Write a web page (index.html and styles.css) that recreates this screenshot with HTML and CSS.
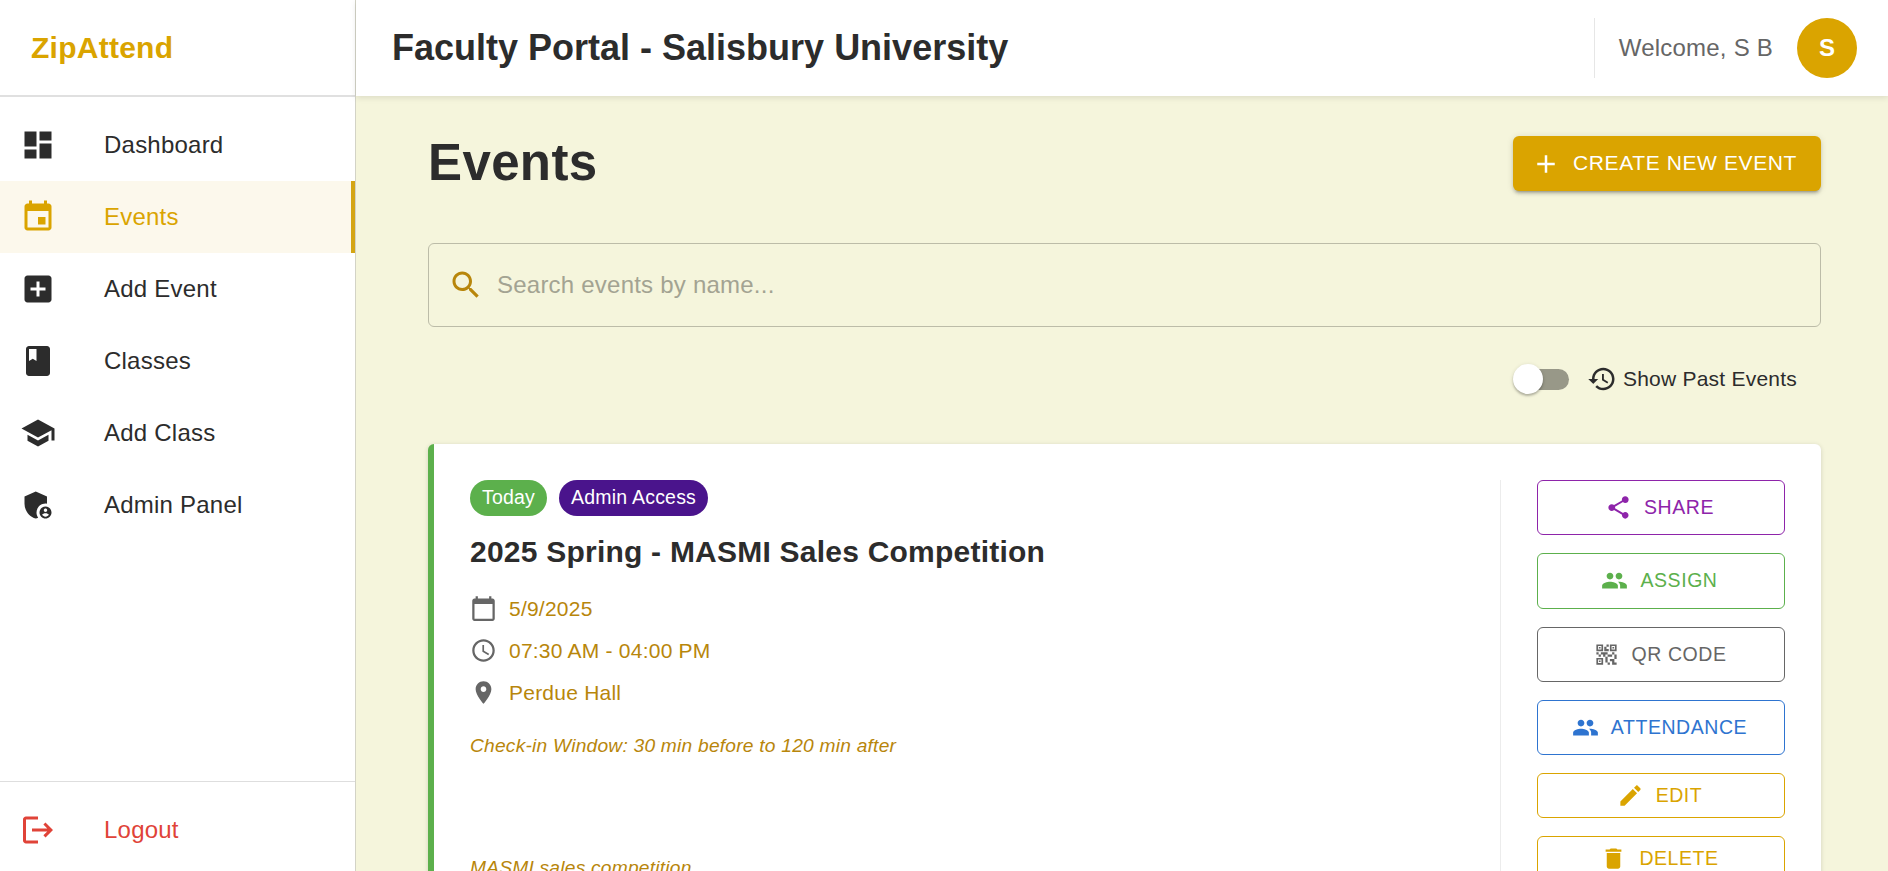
FILE: index.html
```html
<!DOCTYPE html>
<html lang="en">
<head>
<meta charset="utf-8">
<title>ZipAttend</title>
<link rel="stylesheet" href="styles.css">
</head>
<body>
<div class="app">
  <aside class="sidebar">
    <div class="brand">ZipAttend</div>
    <nav class="nav">
      <a class="nav-item"><span class="nav-icon"><svg viewBox="0 0 24 24"><path d="M3 13h8V3H3v10zm0 8h8v-6H3v6zm10 0h8V11h-8v10zm0-18v6h8V3h-8z"/></svg></span>Dashboard</a>
      <a class="nav-item active"><span class="nav-icon"><svg viewBox="0 0 24 24"><path d="M17 12h-5v5h5v-5zM16 1v2H8V1H6v2H5c-1.11 0-1.99.9-1.99 2L3 19c0 1.1.89 2 2 2h14c1.1 0 2-.9 2-2V5c0-1.1-.9-2-2-2h-1V1h-2zm3 18H5V8h14v11z"/></svg></span>Events</a>
      <a class="nav-item"><span class="nav-icon"><svg viewBox="0 0 24 24"><path d="M19 3H5c-1.11 0-2 .9-2 2v14c0 1.1.89 2 2 2h14c1.1 0 2-.9 2-2V5c0-1.1-.9-2-2-2zm-2 10h-4v4h-2v-4H7v-2h4V7h2v4h4v2z"/></svg></span>Add Event</a>
      <a class="nav-item"><span class="nav-icon"><svg viewBox="0 0 24 24"><path d="M18 2H6c-1.1 0-2 .9-2 2v16c0 1.1.9 2 2 2h12c1.1 0 2-.9 2-2V4c0-1.1-.9-2-2-2zM6 4h5v8l-2.5-1.5L6 12V4z"/></svg></span>Classes</a>
      <a class="nav-item"><span class="nav-icon"><svg viewBox="0 0 24 24"><path d="M5 13.18v4L12 21l7-3.82v-4L12 17l-7-3.82zM12 3 1 9l11 6 9-4.91V17h2V9L12 3z"/></svg></span>Add Class</a>
      <a class="nav-item"><span class="nav-icon"><svg viewBox="0 0 24 24"><path d="M17 11c.34 0 .67.04 1 .09V6.27L10.5 3 3 6.27v4.91c0 4.54 3.2 8.79 7.5 9.82.55-.13 1.08-.32 1.6-.55-.69-.98-1.1-2.17-1.1-3.45 0-3.31 2.69-6 6-6z"/><path d="M17 13c-2.21 0-4 1.79-4 4s1.79 4 4 4 4-1.79 4-4-1.79-4-4-4zm0 1.38c.62 0 1.12.51 1.12 1.12s-.51 1.12-1.12 1.12-1.12-.51-1.12-1.12.5-1.12 1.12-1.12zm0 5.37c-.93 0-1.74-.46-2.24-1.17.05-.72 1.51-1.08 2.24-1.08s2.19.36 2.24 1.08c-.5.71-1.31 1.17-2.24 1.17z"/></svg></span>Admin Panel</a>
    </nav>
    <div class="nav-footer">
      <a class="nav-item logout"><span class="nav-icon"><svg viewBox="0 0 24 24"><path d="m17 7-1.41 1.41L18.17 11H8v2h10.17l-2.58 2.58L17 17l5-5zM4 5h8V3H4c-1.1 0-2 .9-2 2v14c0 1.1.9 2 2 2h8v-2H4V5z"/></svg></span>Logout</a>
    </div>
  </aside>
  <div class="page">
    <header class="topbar">
      <div class="portal">Faculty Portal - Salisbury University</div>
      <div class="user"><span>Welcome, S B</span><span class="avatar">S</span></div>
    </header>
    <main class="content">
      <div class="heading">
        <h1>Events</h1>
        <button class="create"><svg viewBox="0 0 24 24"><path d="M19 13h-6v6h-2v-6H5v-2h6V5h2v6h6v2z"/></svg><span>CREATE NEW EVENT</span></button>
      </div>
      <div class="search">
        <svg viewBox="0 0 24 24"><path d="M15.5 14h-.79l-.28-.27C15.41 12.59 16 11.11 16 9.5 16 5.91 13.09 3 9.5 3S3 5.91 3 9.5 5.91 16 9.5 16c1.61 0 3.09-.59 4.23-1.57l.27.28v.79l5 4.99L20.49 19l-4.99-5zm-6 0C7.01 14 5 11.99 5 9.5S7.01 5 9.5 5 14 7.01 14 9.5 11.99 14 9.5 14z"/></svg>
        <span>Search events by name...</span>
      </div>
      <div class="filter">
        <span class="switch"><span class="thumb"></span></span>
        <svg viewBox="0 0 24 24"><path d="M13 3c-4.97 0-9 4.03-9 9H1l3.89 3.89.07.14L9 12H6c0-3.87 3.13-7 7-7s7 3.13 7 7-3.13 7-7 7c-1.93 0-3.68-.79-4.94-2.06l-1.42 1.42C8.27 19.99 10.51 21 13 21c4.97 0 9-4.03 9-9s-4.03-9-9-9zm-1 5v5l4.28 2.54.72-1.21-3.5-2.08V8H12z"/></svg>
        <span>Show Past Events</span>
      </div>
      <section class="card">
        <div class="details">
          <div class="chips"><span class="chip today">Today</span><span class="chip admin">Admin Access</span></div>
          <h2>2025 Spring - MASMI Sales Competition</h2>
          <div class="facts">
            <div class="fact"><svg viewBox="0 0 24 24"><path d="M20 3h-1V1h-2v2H7V1H5v2H4c-1.1 0-2 .9-2 2v16c0 1.1.9 2 2 2h16c1.1 0 2-.9 2-2V5c0-1.1-.9-2-2-2zm0 18H4V8h16v13z"/></svg>5/9/2025</div>
            <div class="fact"><svg viewBox="0 0 24 24"><path d="M11.99 2C6.47 2 2 6.48 2 12s4.47 10 9.99 10C17.52 22 22 17.52 22 12S17.52 2 11.99 2zM12 20c-4.42 0-8-3.58-8-8s3.58-8 8-8 8 3.58 8 8-3.58 8-8 8zm.5-13H11v6l5.25 3.15.75-1.23-4.5-2.67z"/></svg>07:30 AM - 04:00 PM</div>
            <div class="fact"><svg viewBox="0 0 24 24"><path d="M12 2C8.13 2 5 5.13 5 9c0 5.25 7 13 7 13s7-7.75 7-13c0-3.87-3.13-7-7-7zm0 9.5c-1.38 0-2.5-1.12-2.5-2.5s1.12-2.5 2.5-2.5 2.5 1.12 2.5 2.5-1.12 2.5-2.5 2.5z"/></svg>Perdue Hall</div>
          </div>
          <p class="note">Check-in Window: 30 min before to 120 min after</p>
          <p class="note description">MASMI sales competition</p>
        </div>
        <div class="actions">
          <button class="action share"><svg viewBox="0 0 24 24"><path d="M18 16.08c-.76 0-1.44.3-1.96.77L8.91 12.7c.05-.23.09-.46.09-.7s-.04-.47-.09-.7l7.05-4.11c.54.5 1.25.81 2.04.81 1.66 0 3-1.34 3-3s-1.34-3-3-3-3 1.34-3 3c0 .24.04.47.09.7L8.04 9.81C7.5 9.31 6.79 9 6 9c-1.66 0-3 1.34-3 3s1.34 3 3 3c.79 0 1.5-.31 2.04-.81l7.12 4.16c-.05.21-.08.43-.08.65 0 1.61 1.31 2.92 2.92 2.92s2.92-1.31 2.92-2.92-1.31-2.92-2.92-2.92z"/></svg>SHARE</button>
          <button class="action assign"><svg viewBox="0 0 24 24"><path d="M16 11c1.66 0 2.99-1.34 2.99-3S17.66 5 16 5s-3 1.34-3 3 1.34 3 3 3zm-8 0c1.66 0 2.99-1.34 2.99-3S9.66 5 8 5 5 6.34 5 8s1.34 3 3 3zm0 2c-2.33 0-7 1.17-7 3.5V19h14v-2.5c0-2.33-4.67-3.5-7-3.5zm8 0c-.29 0-.62.02-.97.05 1.16.84 1.97 1.97 1.97 3.45V19h6v-2.5c0-2.33-4.67-3.5-7-3.5z"/></svg>ASSIGN</button>
          <button class="action qr"><svg viewBox="0 0 24 24"><path d="M15 21h-2v-2h2v2zm-2-7h-2v5h2v-5zm8-2h-2v4h2v-4zm-2-2h-2v2h2v-2zM7 12H5v2h2v-2zm-2-2H3v2h2v-2zm7-5h2V3h-2v2zm-7.5-.5v3h3v-3h-3zM9 9H3V3h6v6zm-4.5 7.5v3h3v-3h-3zM9 21H3v-6h6v6zm7.5-16.5v3h3v-3h-3zM21 9h-6V3h6v6zm-2 10v-3h-4v2h2v3h4v-2h-2zm-2-7h-4v2h4v-2zm-4-2H7v2h2v2h2v-2h2v-2zm1-1V7h-2V5h-2v4h4zM6.75 5.25h-1.5v1.5h1.5v-1.5zm0 12h-1.5v1.5h1.5v-1.5zm12-12h-1.5v1.5h1.5v-1.5z"/></svg>QR CODE</button>
          <button class="action attendance"><svg viewBox="0 0 24 24"><path d="M16 11c1.66 0 2.99-1.34 2.99-3S17.66 5 16 5s-3 1.34-3 3 1.34 3 3 3zm-8 0c1.66 0 2.99-1.34 2.99-3S9.66 5 8 5 5 6.34 5 8s1.34 3 3 3zm0 2c-2.33 0-7 1.17-7 3.5V19h14v-2.5c0-2.33-4.67-3.5-7-3.5zm8 0c-.29 0-.62.02-.97.05 1.16.84 1.97 1.97 1.97 3.45V19h6v-2.5c0-2.33-4.67-3.5-7-3.5z"/></svg>ATTENDANCE</button>
          <button class="action compact"><svg viewBox="0 0 24 24"><path d="M3 17.25V21h3.75L17.81 9.94l-3.75-3.75L3 17.25zM20.71 7.04c.39-.39.39-1.02 0-1.41l-2.34-2.34c-.39-.39-1.02-.39-1.41 0l-1.83 1.83 3.75 3.75 1.83-1.83z"/></svg>EDIT</button>
          <button class="action compact"><svg viewBox="0 0 24 24"><path d="M6 19c0 1.1.9 2 2 2h8c1.1 0 2-.9 2-2V7H6v12zM19 4h-3.5l-1-1h-5l-1 1H5v2h14V4z"/></svg>DELETE</button>
        </div>
      </section>
    </main>
  </div>
</div>
</body>
</html>
```
FILE: styles.css
```css
* { box-sizing: border-box; }
body {
  margin: 0;
  font-family: "Liberation Sans", Arial, sans-serif;
  font-size: 24px;
  letter-spacing: 0.00938em;
  color: #2c2c2c;
  background: #f5f5dc;
}
svg { display: block; flex: none; fill: currentColor; }
h1, h2, p { margin: 0; }
button { font-family: inherit; margin: 0; border: 0; }

.app { display: flex; height: 871px; overflow: hidden; }

.sidebar {
  width: 356px;
  flex: none;
  display: flex;
  flex-direction: column;
  background: #fff;
  border-right: 1px solid #d3d3c6;
}
.brand {
  height: 97px;
  padding: 0 31px;
  line-height: 95px;
  border-bottom: 2px solid #e0e0e0;
  color: #daa400;
  font-size: 30px;
  font-weight: 700;
  letter-spacing: 0.0085em;
}
.nav { flex: 1; padding-top: 12px; }
.nav-item { display: flex; align-items: center; height: 72px; padding-left: 20px; }
.nav-item.active {
  color: #daa400;
  background: #fcf8ec;
  border-right: 4px solid #d4a514;
}
.nav-icon { width: 84px; }
.nav-icon svg { width: 36px; height: 36px; }
.nav-footer { height: 90px; padding-top: 12px; border-top: 1px solid #dedede; }
.logout { color: #e04338; }

.page { flex: 1; min-width: 0; display: flex; flex-direction: column; }
.topbar {
  height: 96px;
  flex: none;
  display: flex;
  align-items: center;
  justify-content: space-between;
  padding: 0 31px 0 36px;
  background: #fff;
  box-shadow: 0 2px 6px rgba(0, 0, 0, 0.1);
}
.portal { font-size: 36px; font-weight: 700; letter-spacing: 0; }
.user {
  display: flex;
  align-items: center;
  gap: 24px;
  height: 60px;
  padding-left: 24px;
  border-left: 1px solid #e6e6e6;
  color: #666;
}
.avatar {
  width: 60px;
  height: 60px;
  border-radius: 50%;
  background: #daa400;
  color: #fff;
  font-weight: 700;
  line-height: 60px;
  text-align: center;
}

.content { padding: 36px 67px 0 72px; }
.heading { display: flex; align-items: center; justify-content: space-between; height: 63px; }
h1 { padding-bottom: 2px; font-size: 51px; line-height: 61px; font-weight: 700; letter-spacing: 0.00735em; }
.create {
  display: flex;
  align-items: center;
  gap: 12px;
  height: 55px;
  padding: 0 24px 0 18px;
  border-radius: 6px;
  background: #daa400;
  color: #fff;
  font-size: 21px;
  letter-spacing: 0.02857em;
  box-shadow: 0 4px 2px -3px rgba(0, 0, 0, 0.2), 0 3px 3px rgba(0, 0, 0, 0.14), 0 1px 7px rgba(0, 0, 0, 0.12);
}
.create svg { width: 30px; height: 30px; }
.create span { padding-bottom: 2px; }
.search {
  display: flex;
  align-items: center;
  gap: 13px;
  height: 84px;
  margin-top: 48px;
  padding-left: 19px;
  border: 1px solid #bcbca8;
  border-radius: 6px;
  color: #a3a392;
}
.search svg { width: 36px; height: 36px; color: #b8860b; }
.filter {
  display: flex;
  align-items: center;
  justify-content: flex-end;
  height: 30px;
  margin-top: 37px;
  padding-right: 24px;
  font-size: 21px;
  letter-spacing: 0.01071em;
}
.filter svg { width: 30px; height: 30px; margin: 0 6px 0 18px; }
.switch {
  display: flex;
  align-items: center;
  width: 51px;
  height: 21px;
  border-radius: 11px;
  background: #989888;
}
.thumb {
  width: 30px;
  height: 30px;
  flex: none;
  margin-left: -5px;
  border-radius: 50%;
  background: #fff;
  box-shadow: 0 2px 2px rgba(0, 0, 0, 0.2), 0 1px 4px rgba(0, 0, 0, 0.14);
}

.card {
  display: flex;
  height: 560px;
  margin-top: 50px;
  padding: 36px;
  border-left: 6px solid #5cb04c;
  border-radius: 6px;
  background: #fff;
  box-shadow: 0 3px 2px -2px rgba(0, 0, 0, 0.14), 0 1px 5px rgba(0, 0, 0, 0.14);
}
.details { flex: 1; }
.chips { display: flex; gap: 12px; }
.chip {
  height: 36px;
  padding: 0 12px;
  border-radius: 18px;
  color: #fff;
  font-size: 19.5px;
  line-height: 35px;
  letter-spacing: 0.01071em;
}
.today { background: #5cb04c; }
.admin { background: #4a148c; }
h2 { margin-top: 12px; font-size: 30px; line-height: 48px; letter-spacing: 0.0075em; }
.facts { display: flex; flex-direction: column; gap: 12px; margin-top: 18px; }
.fact {
  display: flex;
  align-items: center;
  gap: 12px;
  font-size: 21px;
  line-height: 30px;
  letter-spacing: 0.01071em;
  color: #b8860b;
}
.fact svg { width: 27px; height: 27px; margin-bottom: 1px; color: #666; }
.note {
  margin-top: 24px;
  font-size: 19.2px;
  line-height: 27px;
  letter-spacing: 0.0115em;
  font-style: italic;
  color: #b8860b;
}
.description { margin-top: 95px; }
.actions {
  width: 285px;
  display: flex;
  flex-direction: column;
  gap: 18px;
  padding-left: 36px;
  border-left: 1px solid #ececec;
}
.action {
  display: flex;
  flex: none;
  align-items: center;
  justify-content: center;
  gap: 12px;
  height: 55.25px;
  padding: 0 12px 0 9px;
  border: 1px solid;
  border-radius: 6px;
  background: none;
  font-size: 19.5px;
  letter-spacing: 0.02857em;
}
.action svg { width: 27px; height: 27px; }
.share { color: #8e24aa; }
.assign { color: #5cb04c; }
.qr { color: #666; }
.attendance { color: #2e74d0; }
.compact { height: 45px; color: #daa400; }
```
